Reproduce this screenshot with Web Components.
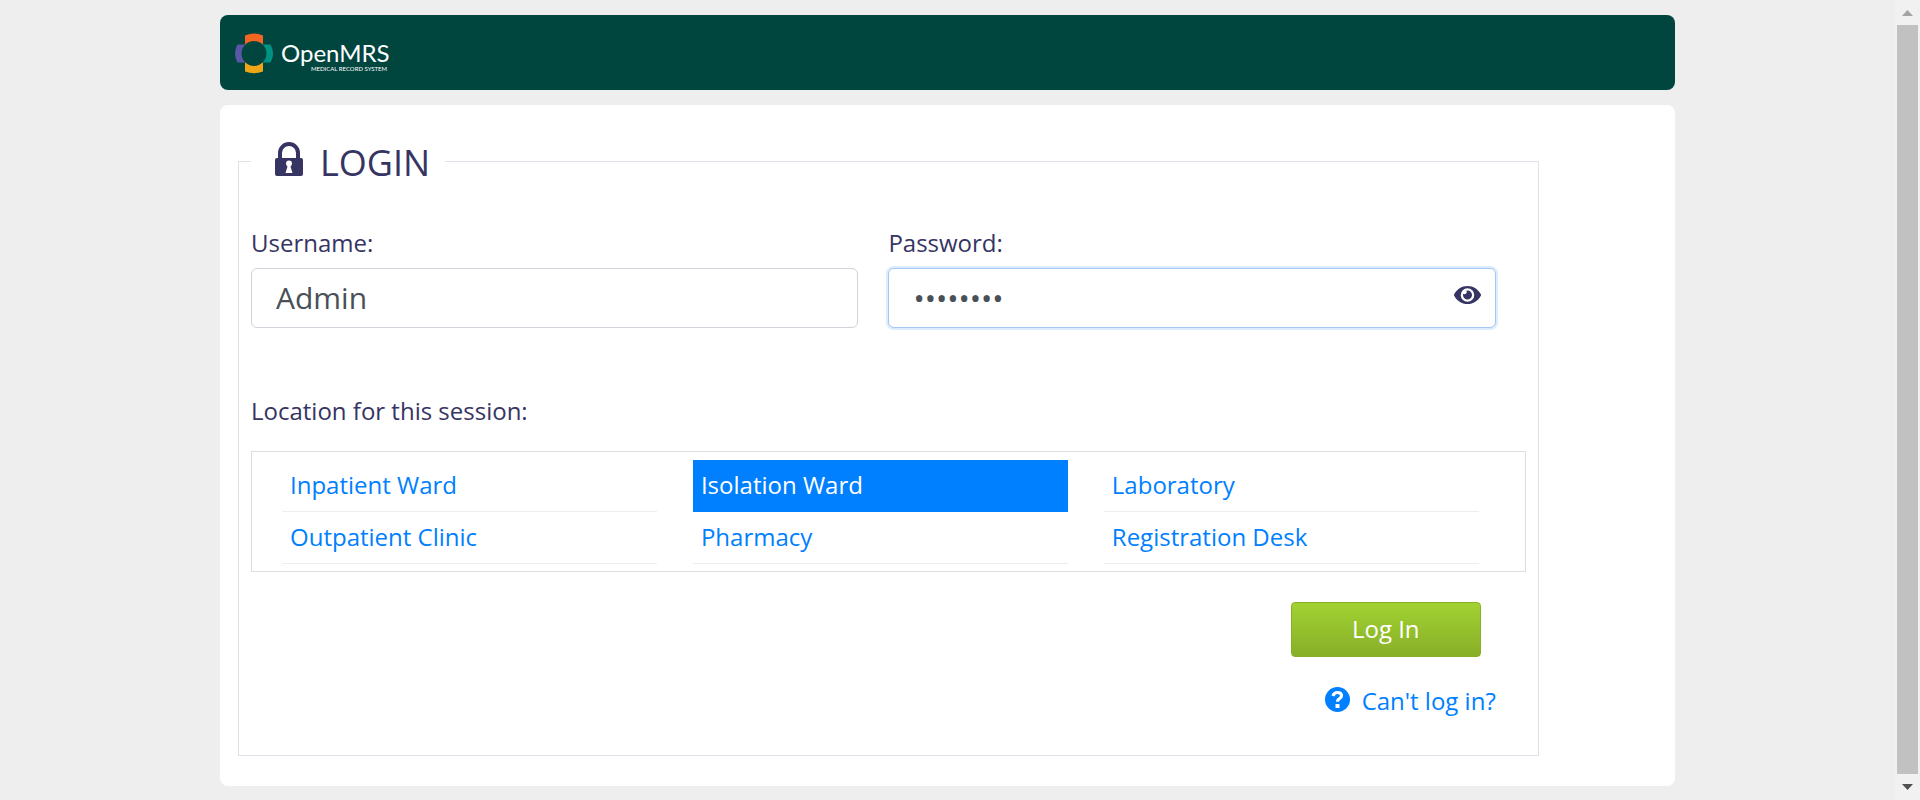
<!DOCTYPE html>
<html lang="en">
<head>
<meta charset="utf-8">
<title>Login</title>
<style>
  html, body { margin: 0; }
  body {
    background: #eeeeee;
    color: #363463;
    font: 24px/36px "Open Sans", sans-serif;
  }
</style>
</head>
<body>
<app-shell>
  <app-header></app-header>
  <app-card><login-form></login-form></app-card>
</app-shell>
<script>
function define(name, html, setup) {
  const template = document.createElement('template');
  template.innerHTML = '<style>*{box-sizing:border-box}</style>' + html;
  customElements.define(name, class extends HTMLElement {
    constructor() {
      super();
      this.attachShadow({ mode: 'open' }).append(template.content.cloneNode(true));
    }
    connectedCallback() {
      if (setup && !this.ready) { this.ready = true; setup(this, this.shadowRoot); }
    }
  });
}

define('app-logo', `
  <style>
    :host { display: block; }
    a, svg { display: block; }
    .name { font: 24px Lato, sans-serif; fill: #fff; }
    .tag { font: 6px Lato, sans-serif; fill: #fff; }
  </style>
  <a href="#" aria-label="OpenMRS home">
    <svg width="160" height="46" viewBox="0 0 160 46">
      <path fill="#f26522" d="M11 9V5.500Q20 1.500 29 5.500V16H11z"/>
      <path fill="#5b57a6" d="M11 14.500H3.500Q-1.500 23.500 3.500 32.500H11z"/>
      <path fill="#009384" d="M29 14.500H36.500Q41.500 23.500 36.500 32.500H29z"/>
      <path fill="#eea616" d="M11 31V41.500Q20 45 29 41.500V31z"/>
      <circle cx="20" cy="23.500" r="12.500" fill="#00463f"/>
      <text class="name" x="47" y="32">OpenMRS</text>
      <text class="tag" x="77" y="41">MEDICAL RECORD SYSTEM</text>
    </svg>
  </a>`);

define('app-header', `
  <style>
    :host { display: block; }
    header { display: flex; align-items: center; height: 75px; padding: 0 14px; border-radius: 8px; background: #00463f; }
  </style>
  <header><app-logo></app-logo></header>`);

define('app-card', `
  <style>
    :host { display: block; padding: 29px 18px 30px; border-radius: 8px; background: #fff; }
  </style>
  <slot></slot>`);

define('scroll-rail', `
  <style>
    :host { display: flex; flex-direction: column; width: 25px; height: 100vh; position: sticky; top: 0; padding: 0 2px 1px; background: #f1f1f1; box-sizing: border-box; }
    svg { display: block; width: 21px; height: 25px; }
    div { flex: 1; background: #c1c1c1; }
  </style>
  <svg viewBox="0 0 21 25" fill="#a3a3a3"><path d="M5 16L10.500 10L16 16z"/></svg>
  <div></div>
  <svg viewBox="0 0 21 25" fill="#505050"><path d="M5 10L10.500 16L16 10z"/></svg>`);

define('app-shell', `
  <style>
    :host { display: flex; align-items: flex-start; }
    main { flex: 1; padding: 15px 15px 14px; }
    .column { display: grid; gap: 15px; max-width: 1455px; margin: 0 auto; }
  </style>
  <main><div class="column"><slot></slot></div></main>
  <scroll-rail></scroll-rail>`);

define('text-field', `
  <style>
    :host { display: block; min-width: 0; }
    label { display: block; margin-bottom: 7px; }
    .box { display: flex; align-items: center; height: 60px; padding: 0 14px 0 24px; border: 1px solid #ced4da; border-radius: 6px; background: #fff; }
    :host([active]) .box { border-color: #a3c9f1; box-shadow: 0 0 0 2px #dcecfd; }
    input { flex: 1; min-width: 0; height: 100%; padding: 0 0 2px; border: 0; outline: 0; background: none; color: #495057; font: 30px "Open Sans", sans-serif; }
  </style>
  <label for="input"></label>
  <div class="box"><input id="input"><slot></slot></div>`,
  (host, root) => {
    const input = root.querySelector('input');
    root.querySelector('label').textContent = host.getAttribute('label');
    input.type = host.getAttribute('type') || 'text';
    input.value = host.getAttribute('value');
  });

define('eye-toggle', `
  <style>
    :host { display: block; }
    button { display: block; padding: 0 0 6px; border: 0; background: none; color: inherit; }
    svg { display: block; }
  </style>
  <button type="button" aria-label="Show password">
    <svg width="27" height="18" viewBox="0 0 576 384" fill="currentColor">
      <path d="M572.500 177.400C518.300 71.600 410.900 0 288 0S57.700 71.600 3.500 177.400a32.400 32.400 0 0 0 0 29.200C57.700 312.400 165.100 384 288 384s230.300-71.600 284.500-177.400a32.400 32.400 0 0 0 0-29.200zM288 336a144 144 0 1 1 144-144 143.900 143.900 0 0 1-144 144zm0-240a95.300 95.300 0 0 0-25.300 3.800 47.900 47.900 0 0 1-66.900 66.900A95.800 95.800 0 1 0 288 96z"/>
    </svg>
  </button>`);

define('location-item', `
  <style>
    :host { display: block; }
    a { display: block; height: 52px; padding: 7px 8px; border-bottom: 1px solid #eeeeee; color: #007fff; text-decoration: none; }
    :host([selected]) a { background: #007fff; border-color: #007fff; color: #fff; }
  </style>
  <a href="#"><slot></slot></a>`);

define('location-list', `
  <style>
    :host { display: grid; grid-template-columns: repeat(3, minmax(0, 1fr)); column-gap: 36px; padding: 8px 46px 7px 30px; border: 1px solid #dddddd; }
  </style>
  <slot></slot>`);

define('login-form', `
  <style>
    :host { display: block; }
    fieldset { width: calc(100% * 11 / 12); min-width: 0; margin: 0; padding: 0 12px 36px; border: 1px solid #e0e0e8; }
    legend { display: flex; align-items: center; gap: 17px; padding: 3px 15px 0 24px; font-size: 36px; line-height: 51px; }
    legend svg { display: block; margin-bottom: 6px; }
    .fields { display: grid; grid-template-columns: 1fr 1fr; gap: 30px; padding: 37px 30px 65px 0; }
    .caption { margin: 0 0 22px; }
    .actions { display: flex; flex-direction: column; align-items: flex-end; gap: 26px; padding: 30px 30px 0 0; }
    .submit { width: 190px; height: 55px; margin-right: 15px; padding: 0 0 2px; border: 1px solid #88af28; border-radius: 4px; background: linear-gradient(#a1d232, #88af28); color: #fff; font: inherit; }
    .help { display: flex; align-items: center; gap: 12px; color: #007fff; text-decoration: none; }
    .help svg { margin-bottom: 3px; }
  </style>
  <form>
    <fieldset>
      <legend>
        <svg width="28" height="35" viewBox="0 0 28 35">
          <path d="M5 17V11a9 9 0 0 1 18 0V17" fill="none" stroke="#363463" stroke-width="4"/>
          <rect y="16" width="28" height="18" rx="2" fill="#363463"/>
          <path fill="#fff" d="M11 21.500a3 3 0 0 1 6 0q0 2-1.500 3L17.500 31h-7L12.500 24.500q-1.500-1-1.500-3z"/>
        </svg>
        LOGIN
      </legend>
      <div class="fields">
        <text-field label="Username:" value="Admin"></text-field>
        <text-field label="Password:" type="password" value="Admin123" active><eye-toggle></eye-toggle></text-field>
      </div>
      <p class="caption">Location for this session:</p>
      <location-list>
        <location-item>Inpatient Ward</location-item>
        <location-item selected>Isolation Ward</location-item>
        <location-item>Laboratory</location-item>
        <location-item>Outpatient Clinic</location-item>
        <location-item>Pharmacy</location-item>
        <location-item>Registration Desk</location-item>
      </location-list>
      <div class="actions">
        <button class="submit" type="submit">Log In</button>
        <a class="help" href="#">
          <svg width="25" height="25" viewBox="0 0 25 25">
            <circle cx="12.500" cy="12.500" r="12.500" fill="#007fff"/>
            <path d="M8 9q1-3.500 4.500-3.500 4 0 4 3.200 0 1.800-2 2.900-2 1-2 3.100" fill="none" stroke="#fff" stroke-width="3.200"/>
            <rect x="10.500" y="17" width="4" height="4" fill="#fff"/>
          </svg>
          Can't log in?
        </a>
      </div>
    </fieldset>
  </form>`);
</script>
</body>
</html>
